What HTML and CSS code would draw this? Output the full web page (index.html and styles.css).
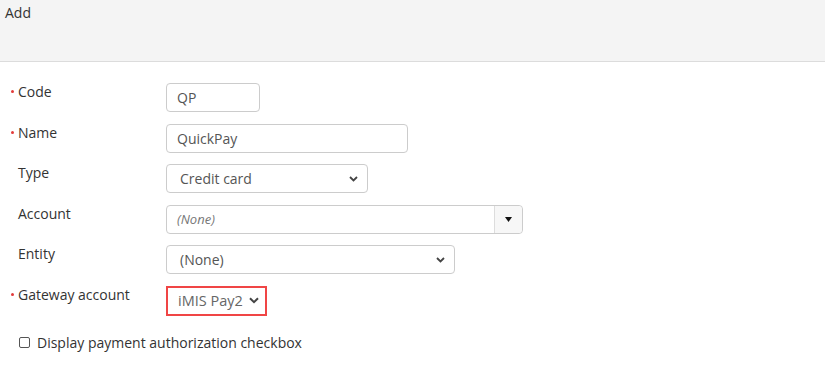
FILE: index.html
```html
<!DOCTYPE html>
<html lang="en">
<head>
    <meta charset="UTF-8">
    <title>Add payment method</title>
    <link rel="stylesheet" href="styles.css">
</head>
<body>
    <div class="header">Add</div>

    <div class="form">
        <div class="row">
            <div class="label"><span class="req"></span>Code</div>
            <div class="field w-code">QP</div>
        </div>
        <div class="row">
            <div class="label"><span class="req"></span>Name</div>
            <div class="field w-name">QuickPay</div>
        </div>
        <div class="row">
            <div class="label"><span class="noreq"></span>Type</div>
            <div class="field select w-type">
                <span>Credit card</span>
                <svg class="chev" width="9" height="6" viewBox="0 0 9 6"><path d="M1 1l3.5 3.5L8 1" fill="none" stroke="#444" stroke-width="1.8"/></svg>
            </div>
        </div>
        <div class="row">
            <div class="label"><span class="noreq"></span>Account</div>
            <div class="field combo w-account">
                <span class="placeholder">(None)</span>
                <div class="combo-btn">
                    <svg width="7" height="5" viewBox="0 0 7 5"><path d="M0 0h7L3.5 5z" fill="#111"/></svg>
                </div>
            </div>
        </div>
        <div class="row">
            <div class="label"><span class="noreq"></span>Entity</div>
            <div class="field select w-entity">
                <span>(None)</span>
                <svg class="chev" width="9" height="6" viewBox="0 0 9 6"><path d="M1 1l3.5 3.5L8 1" fill="none" stroke="#444" stroke-width="1.8"/></svg>
            </div>
        </div>
        <div class="row">
            <div class="label"><span class="req"></span>Gateway account</div>
            <div class="field select highlight w-gateway">
                <span>iMIS Pay2</span>
                <svg class="chev" width="10" height="7" viewBox="0 0 10 7"><path d="M1 1.2l4 4 4-4" fill="none" stroke="#444" stroke-width="2"/></svg>
            </div>
        </div>

        <label class="check">
            <span class="box"></span>
            Display payment authorization checkbox
        </label>
    </div>
</body>
</html>
```

FILE: styles.css
```css
body {
    margin: 0;
    font-family: "Open Sans", Arial, sans-serif;
    font-size: 14px;
    color: #333;
    background: #fff;
}

.header {
    height: 62px;
    padding: 3px 5px 0;
    box-sizing: border-box;
    background: #f4f4f4;
    border-bottom: 1px solid #dcdcdc;
    line-height: 19px;
    color: #333;
}

.form {
    padding: 21px 0 0 11px;
}

.row {
    display: flex;
    align-items: flex-start;
    margin-bottom: 11.5px;
}

.label {
    width: 155px;
    display: flex;
    align-items: center;
    line-height: 18px;
    color: #333;
}

.req {
    width: 3px;
    height: 3px;
    border-radius: 50%;
    background: #e23b3b;
    margin-right: 4px;
    margin-top: -1px;
}

.noreq {
    width: 3px;
    margin-right: 4px;
}

.field {
    height: 29px;
    box-sizing: border-box;
    border: 1px solid #ccc;
    border-radius: 4px;
    padding: 0 10px;
    display: flex;
    align-items: center;
    color: #555;
    background: #fff;
}

.select {
    justify-content: space-between;
    padding-right: 9px;
    padding-left: 13px;
}

.combo {
    padding: 0 0 0 10px;
    justify-content: space-between;
}

.placeholder {
    font-style: italic;
    color: #777;
    font-size: 13px;
}

.combo-btn {
    width: 27px;
    height: 100%;
    border-left: 1px solid #ddd;
    background: #f7f7f7;
    border-radius: 0 4px 4px 0;
    display: flex;
    align-items: center;
    justify-content: center;
}

.highlight {
    border: 2px solid #f04545;
    border-radius: 0;
    height: 30px;
    padding-left: 10px;
    padding-right: 6px;
    font-size: 14.5px;
    color: #666;
}

.w-code { width: 94px; }
.w-name { width: 242px; }
.w-type { width: 202px; }
.w-account { width: 357px; }
.w-entity { width: 289px; }
.w-gateway { width: 101px; }

.check {
    display: flex;
    align-items: center;
    margin: 17px 0 0 8px;
    color: #333;
}

.box {
    width: 9px;
    height: 9px;
    border: 1px solid #555;
    border-radius: 2px;
    margin-right: 7px;
}
```
